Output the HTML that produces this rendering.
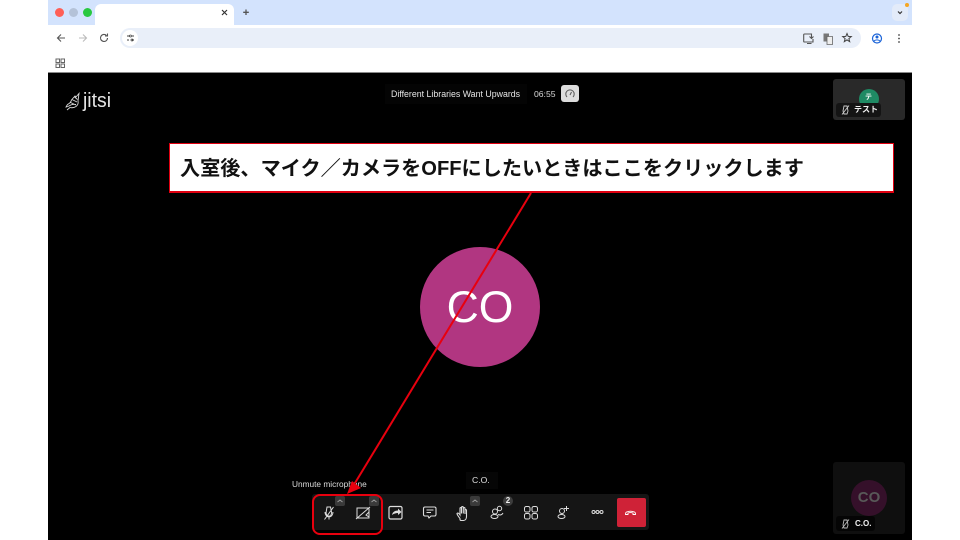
<!DOCTYPE html>
<html lang="ja"><head><meta charset="utf-8">
<style>
html,body{margin:0;padding:0;background:#fff}
body{width:960px;height:540px;overflow:hidden;position:relative;font-family:"Liberation Sans","Noto Sans CJK JP",sans-serif}
div{position:absolute;box-sizing:border-box}
svg{position:absolute;overflow:visible}
.t{white-space:nowrap}
</style></head><body>
<div style="left:48px;top:0;width:864px;height:25px;background:#d3e3fd"></div>
<div style="left:48px;top:25px;width:864px;height:48px;background:#fff;border-radius:6px 6px 0 0"></div>
<div style="left:48px;top:72px;width:864px;height:1px;background:#8a8a8a"></div>
<div style="left:55px;top:8px;width:9px;height:9px;border-radius:50%;background:#fe5f57"></div>
<div style="left:69px;top:8px;width:9px;height:9px;border-radius:50%;background:#b4c2d8"></div>
<div style="left:83px;top:8px;width:9px;height:9px;border-radius:50%;background:#28c840"></div>
<div style="left:95px;top:4px;width:139px;height:22px;background:#fff;border-radius:6px 6px 0 0"></div>
<svg style="left:0;top:0" width="960" height="73" fill="none">
<path d="M222 10l5 5M227 10l-5 5" stroke="#333" stroke-width="1.200"/>
<path d="M246 9.500v5.500M243.200 12.300h5.600" stroke="#555" stroke-width="1.300"/>
<path d="M65 38h-7M61 34.500L57.500 38l3.500 3.500" stroke="#555" stroke-width="1.100"/>
<path d="M79 38h7M83 34.500l3.500 3.500-3.500 3.500" stroke="#bbb" stroke-width="1.100"/>
<path d="M107.500 38a3.500 3.500 0 1 1-1-2.500M107.500 33.500v2.500h-2.500" stroke="#555" stroke-width="1.100"/>
<path d="M56 59h3.500v3.500H56zM61 59h3.500v3.500H61zM56 64h3.500v3.500H56zM61 64h3.500v3.500H61z" stroke="#666" stroke-width="1"/>
</svg>
<div style="left:120px;top:28px;width:741px;height:20px;border-radius:10px;background:#e9eff9"></div>
<div style="left:122px;top:30px;width:16px;height:16px;border-radius:50%;background:#fff"></div>
<svg style="left:0;top:0" width="960" height="73" fill="none">
<path d="M127 36h3M132 36h2M127 40h2M132 40h2" stroke="#444" stroke-width="1"/><circle cx="130.500" cy="36" r="1" stroke="#444" stroke-width=".8"/><circle cx="132" cy="40" r="1" stroke="#444" stroke-width=".8"/>
<path d="M812 34h-7.500a.8.800 0 0 0-.8.800v6.400a.8.800 0 0 0 .8.800H813v-3M807 43.500h4.500M811.500 33.500v5M809.500 36.500l2 2 2-2" stroke="#555" stroke-width="1.100"/>
<path d="M823.500 33.500h5.500v8h-5.500z" fill="#777"/><path d="M827 36.500h5.500v8H827z" fill="#eee" stroke="#666" stroke-width=".8"/>
<path d="M847 33.500l1.200 2.900 3.100.2-2.400 2 .8 3-2.700-1.700-2.700 1.700.8-3-2.400-2 3.100-.2z" stroke="#444" stroke-width="1"/>
<circle cx="877" cy="38.500" r="4.500" stroke="#1a63d8" stroke-width="1.200"/><circle cx="877" cy="37" r="1.500" fill="#1a63d8"/><path d="M874 41c1.500-1.500 4.500-1.500 6 0" stroke="#1a63d8"/>
<circle cx="899" cy="35" r=".9" fill="#444"/><circle cx="899" cy="38.500" r=".9" fill="#444"/><circle cx="899" cy="42" r=".9" fill="#444"/>
</svg>
<div style="left:892px;top:4px;width:16px;height:17px;border-radius:5px;background:#e3ebf9"></div>
<div style="left:905px;top:3px;width:4px;height:4px;border-radius:50%;background:#f5a623"></div>
<svg style="left:0;top:0" width="960" height="30" fill="none"><path d="M898 11.500l2 2 2-2" stroke="#333" stroke-width="1.200"/></svg>

<div style="left:48px;top:73px;width:864px;height:467px;background:#000"></div>

<svg style="left:0;top:0" width="100" height="120" fill="none" stroke="#d8d8d8" stroke-width=".9"><path d="M67 110l3-2.500c2 .5 4 .3 6-1 2-1.500 2.500-3.500 2-5.500l1-7.500-3 3.500-1-1-3.500 4c-.5 2-2 3.500-4 4.500l-1.500 2.500c1 0 2-.5 3-1M70.500 102.500l5.500 2.500M69 106c2-1.500 4.500-2 7-1.500M72 99.500l5 2.500M74 96.500l3.500 3"/></svg>
<div class="t" style="left:83px;top:90px;font-size:20px;line-height:22px;color:#e4e4e4;font-weight:400;transform-origin:0 0;transform:scaleX(.97)">jitsi</div>

<div style="left:385px;top:84px;width:142px;height:20px;background:#040404"></div>
<div class="t" style="left:391px;top:88px;font-size:8.800px;line-height:12px;color:#e6e6e6">Different Libraries Want Upwards</div>
<div class="t" style="left:534px;top:88px;font-size:8.600px;line-height:12px;color:#d8d8d8">06:55</div>
<div style="left:561px;top:85px;width:18px;height:17px;border-radius:3px;background:#dcdcdc"></div>
<svg style="left:0;top:0" width="600" height="110" fill="none"><path d="M567 97a4.200 4.200 0 1 1 6 0M570 95l1.500-3" stroke="#555" stroke-width="1"/></svg>

<div style="left:833px;top:79px;width:72px;height:41px;border-radius:3px;background:#292929"></div>
<div style="left:859px;top:89px;width:20px;height:20px;border-radius:50%;background:#1f8a64"></div>
<div class="t" style="left:865px;top:93px;font-size:7px;line-height:10px;color:#fff;font-weight:700">テ</div>
<div style="left:836px;top:103px;width:45px;height:14px;border-radius:3px;background:#141414"></div>
<div class="t" style="left:854px;top:105px;font-size:8px;line-height:10px;color:#f2f2f2;font-weight:700">テスト</div>
<svg style="left:0;top:0" width="860" height="120" fill="none" stroke="#ccc" stroke-width=".9"><path d="M844 106h3l1 5-1 3h-3l-1-3zM842 114.500l7-9"/></svg>

<div style="left:169px;top:143px;width:725px;height:50px;background:#fff;border:1px solid #e00010;border-bottom-width:2px"></div>
<div class="t" style="left:180px;top:156px;font-size:20.150px;line-height:26px;font-weight:700;color:#111">入室後、マイク／カメラをOFFにしたいときはここをクリックします</div>

<div style="left:420px;top:247px;width:120px;height:120px;border-radius:50%;background:#b13681"></div>
<div class="t" style="left:420px;top:284px;width:120px;text-align:center;font-size:44.500px;line-height:48px;color:#fff">CO</div>

<div class="t" style="left:292px;top:478px;font-size:8.300px;line-height:12px;color:#dcdcdc">Unmute microphone</div>
<div style="left:466px;top:472px;width:32px;height:17px;background:#060606"></div>
<div class="t" style="left:472px;top:475px;font-size:8.600px;line-height:11px;color:#e0e0e0">C.O.</div>

<div style="left:312px;top:494px;width:337px;height:36px;border-radius:3px;background:#151515"></div>
<div style="left:335px;top:496px;width:10px;height:10px;border-radius:2px;background:#3a3a3a"></div>
<div style="left:369px;top:496px;width:10px;height:10px;border-radius:2px;background:#3a3a3a"></div>
<div style="left:470px;top:496px;width:10px;height:10px;border-radius:2px;background:#3a3a3a"></div>
<div style="left:503px;top:496px;width:10px;height:10px;border-radius:50%;background:#3d3d3d"></div>
<div class="t" style="left:503px;top:496px;width:10px;text-align:center;font-size:8px;line-height:10px;color:#eee;font-weight:700">2</div>
<div style="left:617px;top:498px;width:29px;height:29px;border-radius:2px;background:#cf2237"></div>

<svg style="left:0;top:0" width="960" height="540" fill="none" stroke="#ddd" stroke-width="1">
<path d="M337.500 502l2.500-2 2.500 2M371.500 502l2.500-2 2.500 2M472.500 502l2.500-2 2.500 2" stroke="#999"/>
<path d="M327 507h3.500l1.200 6-1.200 3h-3.500l-1-3zM324.500 519.500l9-12.500M325 512c0 3 2 5 4 5s4-2 4-5M329 517v2.500"/>
<path d="M357 508h12v10h-12zM356 519l14-12"/><path d="M369 512l-3 3 3 2"/>
<path d="M390.500 506.500h10a1.500 1.500 0 0 1 1.500 1.500v9.500a1.500 1.500 0 0 1-1.500 1.500h-10a1.500 1.500 0 0 1-1.500-1.500V508a1.500 1.500 0 0 1 1.500-1.500z" stroke-width="1.200"/><path d="M392 515c.5-3 3-4.500 6-4.500V508.500l3.500 3.500-3.500 3v-2c-2 0-4 .5-6 2z" fill="#ddd" stroke="none"/>
<path d="M425 507h9.500a1.500 1.500 0 0 1 1.500 1.500v6a1.500 1.500 0 0 1-1.500 1.500H431l-2 2-1-2h-3a1.500 1.500 0 0 1-1.500-1.500v-6A1.500 1.500 0 0 1 425 507zM426.500 510h7M426.500 512.500h4.500" stroke-width="1.100"/>
<path d="M460 518.500c-1-1.500-3-3.500-3-5 1-1 2 0 3 1.500v-6.500c0-1.200 1.500-1.200 1.500 0v5-6c0-1.200 1.800-1.200 1.800 0v6-5c0-1.200 1.700-1.200 1.700 0v5.500-3.500c0-1.200 1.500-1.200 1.500 0v6c0 2-1 4-3 4h-2c-1 0-1.500-.5-1.500-1z" stroke-width="1.100"/>
<circle cx="495" cy="511.500" r="2.500"/><ellipse cx="494.500" cy="516.500" rx="3.500" ry="2"/><circle cx="499.500" cy="508.500" r="2.200"/><path d="M498 514.500c2 .8 4 .3 5-1.500"/>
<rect x="524.500" y="506.500" width="5.500" height="5.500" rx="1.800"/><rect x="532" y="506.500" width="5.500" height="5.500" rx="1.800"/><rect x="524.500" y="513.500" width="5.500" height="5.500" rx="1.800"/><rect x="532" y="513.500" width="5.500" height="5.500" rx="1.800"/>
<circle cx="562" cy="511" r="2.500"/><ellipse cx="561.500" cy="516.500" rx="3.500" ry="2"/><path d="M566.500 506v5M564 508.500h5"/>
<circle cx="593.500" cy="512" r="1.500"/><circle cx="597.500" cy="512" r="1.500"/><circle cx="601.500" cy="512" r="1.500"/>
<path d="M625.500 514.500c0-1 0-2 1-2.500 2.500-1 5.500-1 8 0 1 .5 1 1.500 1 2.500h-2.500v-1.500c-1.500-.5-3.500-.5-5 0v1.500z" stroke="#fff" stroke-width=".9"/>
</svg>

<div style="left:833px;top:462px;width:72px;height:72px;border-radius:3px;background:#0f0f0f"></div>
<div style="left:851px;top:480px;width:36px;height:36px;border-radius:50%;background:#35102a"></div>
<div class="t" style="left:851px;top:488px;width:36px;text-align:center;font-size:15px;line-height:20px;color:#585858;font-weight:700">CO</div>
<div style="left:836px;top:516px;width:39px;height:15px;border-radius:3px;background:#050505"></div>
<div class="t" style="left:855px;top:519px;font-size:8px;line-height:10px;color:#f0f0f0;font-weight:700">C.O.</div>
<svg style="left:0;top:0" width="860" height="540" fill="none" stroke="#bbb" stroke-width=".9"><path d="M844 520h3l1 5-1 3h-3l-1-3zM842 528.500l7-9"/></svg>

<div style="left:312px;top:494px;width:71px;height:41px;border:2px solid #e8000e;border-radius:8px"></div>
<svg style="left:0;top:0" width="960" height="540" fill="none">
<path d="M531 193L355 483" stroke="#e8000e" stroke-width="2"/>
<path d="M347 494l5-13 9 7z" fill="#e8000e"/>
</svg>
</body></html>
